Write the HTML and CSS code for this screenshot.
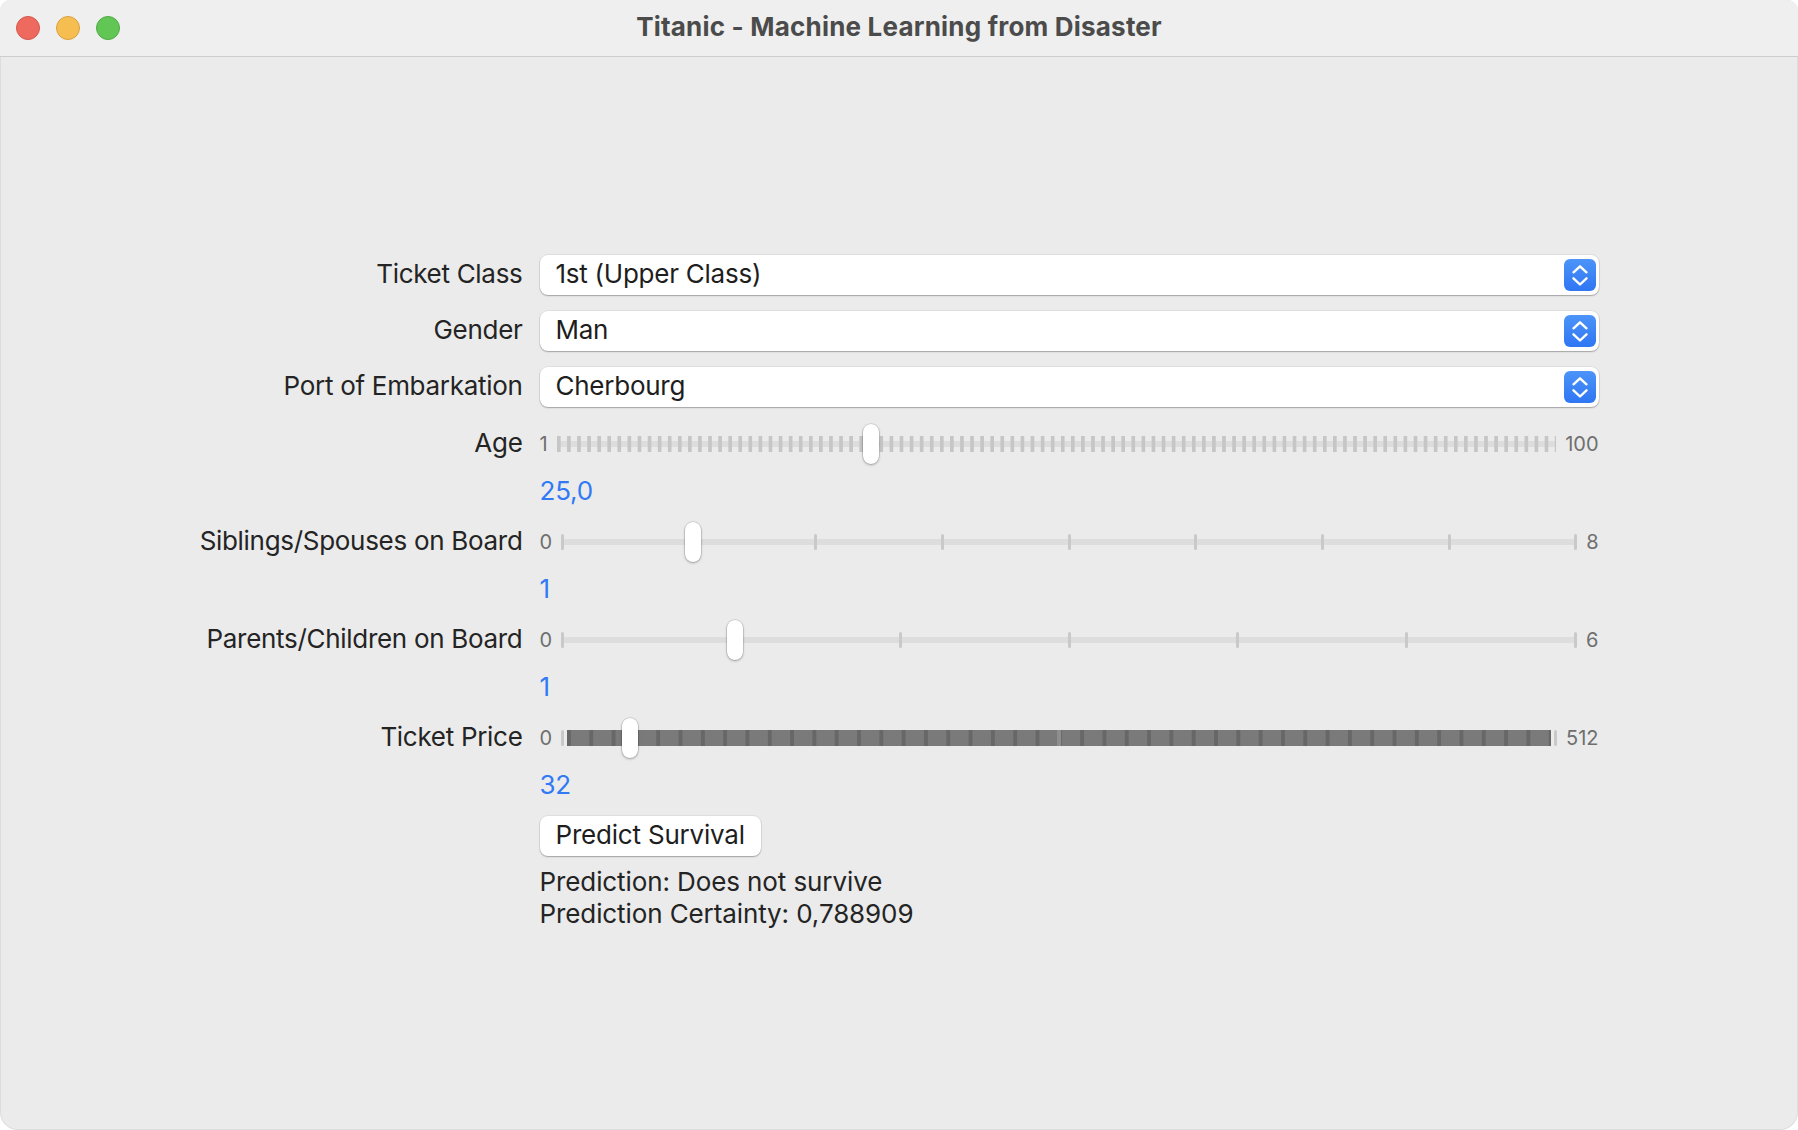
FILE: index.html
```html
<!DOCTYPE html>
<html lang="en">
<head>
<meta charset="utf-8">
<title>Titanic - Machine Learning from Disaster</title>
<link rel="stylesheet" href="styles.css">
</head>
<body>
<div class="window">
  <header class="titlebar">
    <div class="lights">
      <span class="light red"></span>
      <span class="light yellow"></span>
      <span class="light green"></span>
    </div>
    <div class="title">Titanic - Machine Learning from Disaster</div>
    <div></div>
  </header>
  <main class="content">
    <div class="form">
      <div class="row">
        <div class="label">Ticket Class</div>
        <div class="select"><span class="select-text">1st (Upper Class)</span><span class="stepper"><svg viewBox="0 0 32 32" width="32" height="32"><path d="M9.5 13.3 16 7.3l6.5 6M9.5 19.3l6.5 6.2 6.5-6.2" fill="none" stroke="#fff" stroke-width="2.4" stroke-linecap="round" stroke-linejoin="round"/></svg></span></div>
      </div>
      <div class="row gap16">
        <div class="label">Gender</div>
        <div class="select"><span class="select-text">Man</span><span class="stepper"><svg viewBox="0 0 32 32" width="32" height="32"><path d="M9.5 13.3 16 7.3l6.5 6M9.5 19.3l6.5 6.2 6.5-6.2" fill="none" stroke="#fff" stroke-width="2.4" stroke-linecap="round" stroke-linejoin="round"/></svg></span></div>
      </div>
      <div class="row gap16">
        <div class="label">Port of Embarkation</div>
        <div class="select"><span class="select-text">Cherbourg</span><span class="stepper"><svg viewBox="0 0 32 32" width="32" height="32"><path d="M9.5 13.3 16 7.3l6.5 6M9.5 19.3l6.5 6.2 6.5-6.2" fill="none" stroke="#fff" stroke-width="2.4" stroke-linecap="round" stroke-linejoin="round"/></svg></span></div>
      </div>

      <div class="row gap17">
        <div class="label">Age</div>
        <div class="slider">
          <span class="bound">1</span>
          <div class="track dense">
            <span class="thumb" style="left:31.5%"></span>
          </div>
          <span class="bound">100</span>
        </div>
      </div>
      <div class="row gap12 value-row">
        <div></div>
        <div class="value">25,0</div>
      </div>

      <div class="row gap16">
        <div class="label">Siblings/Spouses on Board</div>
        <div class="slider">
          <span class="bound">0</span>
          <div class="track">
            <span class="tick"></span><span class="tick"></span><span class="tick"></span>
            <span class="tick"></span><span class="tick"></span><span class="tick"></span>
            <span class="tick"></span><span class="tick"></span><span class="tick"></span>
            <span class="thumb" style="left:13%"></span>
          </div>
          <span class="bound">8</span>
        </div>
      </div>
      <div class="row gap12 value-row">
        <div></div>
        <div class="value">1</div>
      </div>

      <div class="row gap16">
        <div class="label">Parents/Children on Board</div>
        <div class="slider">
          <span class="bound">0</span>
          <div class="track">
            <span class="tick"></span><span class="tick"></span><span class="tick"></span>
            <span class="tick"></span><span class="tick"></span><span class="tick"></span>
            <span class="tick"></span>
            <span class="thumb" style="left:17.1%"></span>
          </div>
          <span class="bound">6</span>
        </div>
      </div>
      <div class="row gap12 value-row">
        <div></div>
        <div class="value">1</div>
      </div>

      <div class="row gap16">
        <div class="label">Ticket Price</div>
        <div class="slider">
          <span class="bound">0</span>
          <div class="track price">
            <span class="tick"></span><span class="tick"></span>
            <span class="thumb" style="left:6.9%"></span>
          </div>
          <span class="bound">512</span>
        </div>
      </div>
      <div class="row gap12 value-row">
        <div></div>
        <div class="value">32</div>
      </div>

      <div class="row gap16">
        <div></div>
        <div><button class="button" type="button">Predict Survival</button></div>
      </div>
      <div class="row gap10">
        <div></div>
        <div class="result">
          <div>Prediction: Does not survive</div>
          <div>Prediction Certainty: 0,788909</div>
        </div>
      </div>
    </div>
  </main>
</div>
</body>
</html>
```

FILE: styles.css
```css
html, body {
  margin: 0;
  padding: 0;
  background: #ffffff;
}

body {
  font-family: Inter, "Liberation Sans", Arial, sans-serif;
  color: #222222;
}

.window {
  width: 1798px;
  height: 1130px;
  box-sizing: border-box;
  background: #eaebea;
  border-radius: 11px 11px 18px 18px;
  overflow: hidden;
  box-shadow: inset 0 0 0 1px rgba(0, 0, 0, 0.06);
}

.titlebar {
  height: 56px;
  background: #eeefee;
  border-bottom: 1px solid #cdcdcd;
  display: grid;
  grid-template-columns: 1fr auto 1fr;
  align-items: center;
}

.lights {
  display: flex;
  gap: 16px;
  padding-left: 16px;
}

.light {
  width: 24px;
  height: 24px;
  border-radius: 50%;
  box-sizing: border-box;
}

.red { background: #ee6a5f; border: 1px solid #d4574c; }
.yellow { background: #f6be50; border: 1px solid #d9a140; }
.green { background: #62c655; border: 1px solid #4faa43; }

.title {
  font-weight: 700;
  font-size: 26px;
  color: #4b4b4b;
  letter-spacing: 0.2px;
  margin-top: -3px;
}

.content {
  height: 1073px;
  box-sizing: border-box;
  padding-bottom: 2px;
  display: flex;
  align-items: center;
  justify-content: center;
}

.form {
  display: flex;
  flex-direction: column;
}

.row {
  display: grid;
  grid-template-columns: 323px 1059px;
  column-gap: 17px;
  align-items: center;
}

.gap17 { margin-top: 17px; }
.gap16 { margin-top: 16px; }
.gap12 { margin-top: 12px; }
.gap10 { margin-top: 10px; }

.label {
  font-size: 26px;
  line-height: 30px;
  text-align: right;
  white-space: nowrap;
  color: #242424;
  letter-spacing: -0.3px;
  margin-top: -3px;
}

.select {
  height: 40px;
  box-sizing: border-box;
  background: #ffffff;
  border-radius: 8px;
  display: flex;
  align-items: center;
  justify-content: space-between;
  padding: 0 3px 0 16px;
  box-shadow: 0 0 0 1px rgba(0, 0, 0, 0.05), 0 1px 1.5px rgba(0, 0, 0, 0.28);
}

.select-text {
  font-size: 26px;
  color: #1e1e1e;
  letter-spacing: -0.25px;
  margin-top: -4px;
}

.stepper {
  width: 32px;
  height: 32px;
  border-radius: 6px;
  background: linear-gradient(#4c94f8, #2f76f3);
  display: flex;
}

.slider {
  height: 40px;
  display: flex;
  align-items: center;
  gap: 9px;
}

.bound {
  font-size: 20px;
  color: #6f6f6f;
  line-height: 24px;
}

.track {
  position: relative;
  flex: 1;
  height: 40px;
  display: flex;
  justify-content: space-between;
  align-items: center;
}

.track::before {
  content: "";
  position: absolute;
  left: 0;
  right: 0;
  top: 17px;
  height: 6px;
  border-radius: 3px;
  background: #dddddd;
}

.tick {
  position: relative;
  z-index: 1;
  width: 3px;
  height: 16px;
  border-radius: 1.5px;
  background: #c9c9c9;
}

.track.dense::after {
  content: "";
  position: absolute;
  left: 0;
  right: 0;
  top: 12px;
  height: 16px;
  background-image: linear-gradient(to right, #c6c6c6 0, #c6c6c6 4px, transparent 4px);
  background-size: calc((100% - 4px) / 99 + 0.0404px) 16px;
  background-repeat: repeat-x;
}

.track.price::before {
  left: 6px;
  right: 6px;
  top: 12px;
  height: 16px;
  border-radius: 0;
  background: #7a7a7a;
}

.track.price::after {
  content: "";
  position: absolute;
  left: 6px;
  right: 6px;
  top: 12px;
  height: 16px;
  background:
    linear-gradient(#8e8e8e, #8e8e8e) 50% 0 / 4px 100% no-repeat,
    linear-gradient(to right, #676767 0, #676767 4px, transparent 4px) 0 0 / 22.32px 100% repeat-x;
}

.thumb {
  position: absolute;
  top: 0;
  z-index: 3;
  width: 16px;
  height: 40px;
  margin-left: -8px;
  box-sizing: border-box;
  background: #ffffff;
  border-radius: 8px;
  box-shadow: 0 0 0 0.5px rgba(0, 0, 0, 0.18), 0 1px 2.5px rgba(0, 0, 0, 0.3);
}

.value-row {
  height: 30px;
}

.value {
  font-size: 26px;
  line-height: 30px;
  color: #3179f5;
  letter-spacing: -0.2px;
}

.button {
  height: 40px;
  padding: 0 16px 3px;
  border: none;
  border-radius: 8px;
  background: #ffffff;
  font-family: inherit;
  font-size: 26px;
  color: #1e1e1e;
  letter-spacing: -0.2px;
  box-shadow: 0 0 0 1px rgba(0, 0, 0, 0.05), 0 1px 1.5px rgba(0, 0, 0, 0.28);
}

.result {
  font-size: 26px;
  line-height: 32px;
  color: #242424;
  letter-spacing: -0.1px;
}
```
